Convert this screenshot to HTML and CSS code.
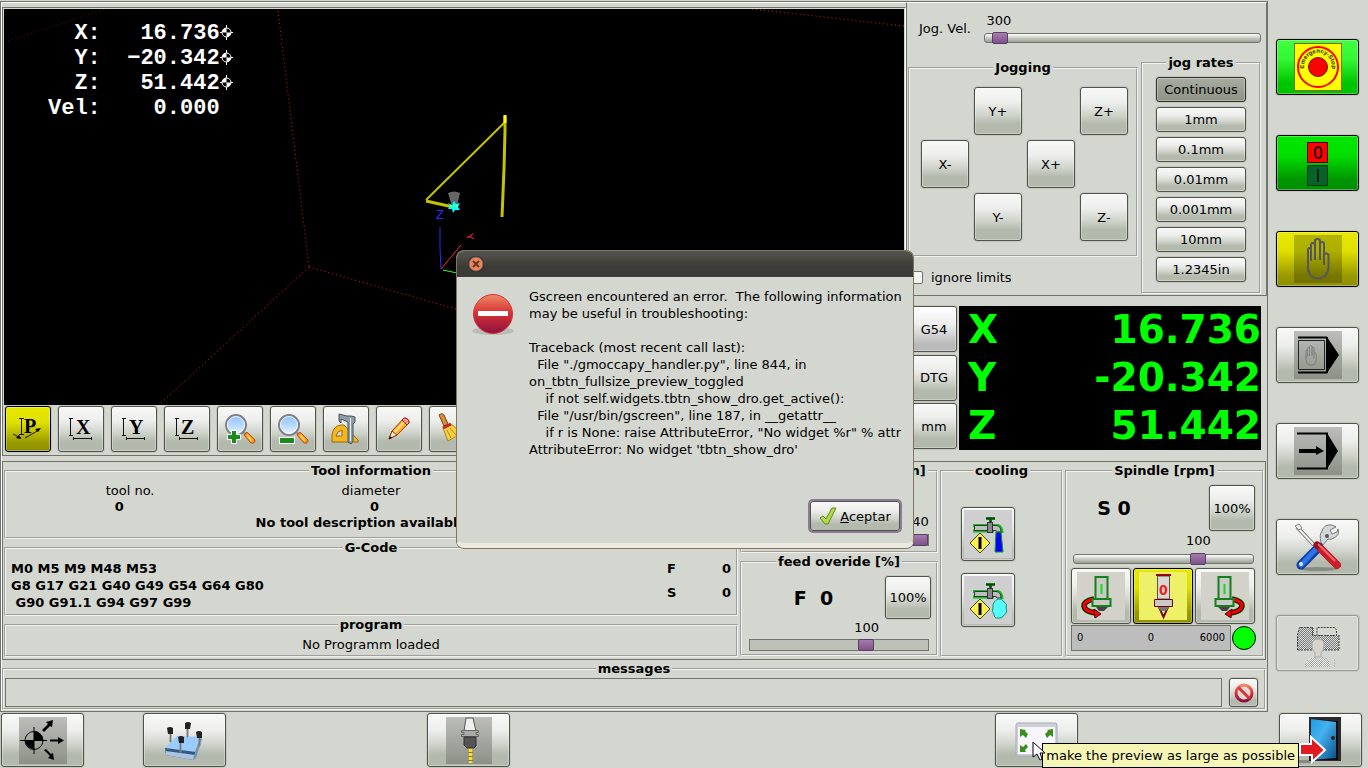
FILE: index.html
```html
<!DOCTYPE html>
<html lang="en">
<head>
    <meta charset="UTF-8">
    <meta name="viewport" content="width=device-width, initial-scale=1.0">
    <title>gmoccapy</title>
    <link rel="stylesheet" href="styles.css">
</head>
<body>
    <!-- shared symbols -->
    <svg class="defs" width="0" height="0">
        <defs>
            <linearGradient id="gray" x1="0" y1="0" x2="0" y2="1">
                <stop offset="0" stop-color="#bdbdbb"/><stop offset="1" stop-color="#8c9186"/>
            </linearGradient>
            <linearGradient id="lens" x1="0" y1="0" x2="0" y2="1">
                <stop offset="0" stop-color="#8fc3ff"/><stop offset="0.5" stop-color="#b5d8ff"/><stop offset="1" stop-color="#eef7ff"/>
            </linearGradient>
            <linearGradient id="red" x1="0" y1="0" x2="0" y2="1">
                <stop offset="0" stop-color="#f08a66"/><stop offset="0.45" stop-color="#d93434"/><stop offset="1" stop-color="#8c1141"/>
            </linearGradient>
            <linearGradient id="door" x1="0" y1="0" x2="1" y2="1">
                <stop offset="0" stop-color="#1f9be0"/><stop offset="0.4" stop-color="#45b2f0"/><stop offset="1" stop-color="#0a4f86"/>
            </linearGradient>
            <pattern id="check" width="2" height="2" patternUnits="userSpaceOnUse">
                <rect width="2" height="2" fill="#dcdedb"/><rect width="1" height="1" fill="#777"/><rect x="1" y="1" width="1" height="1" fill="#777"/>
            </pattern>
            <pattern id="checkLight" width="2" height="2" patternUnits="userSpaceOnUse">
                <rect width="2" height="2" fill="#f8f8f6"/><rect width="1" height="1" fill="#a0a09d"/><rect x="1" y="1" width="1" height="1" fill="#a0a09d"/>
            </pattern>
            <symbol id="homed" viewBox="0 0 13 15">
                <circle cx="6.500" cy="7.500" r="4.500" fill="#000" stroke="#fff"/>
                <path d="M6.500 7.500V3A4.500 4.500 0 0 0 2 7.500ZM6.500 7.500V12A4.500 4.500 0 0 0 11 7.500Z" fill="#fff"/>
                <path d="M6.500 0V3M6.500 12V15M0 7.500H2M11 7.500H13" stroke="#fff"/>
            </symbol>
            <symbol id="zoomer" viewBox="0 0 32 32">
                <path d="M19 19L23 23" stroke="#999" stroke-width="3"/>
                <path d="M20 22L23 19L31 27Q31 31 27 30Z" fill="#f58a1f" stroke="#c4500b"/>
                <path d="M23 22L28 28" stroke="#ffd34d" stroke-width="2"/>
                <circle cx="12" cy="12" r="10" fill="url(#lens)" stroke="#7f8287" stroke-width="2"/>
                <circle cx="12" cy="12" r="8.500" fill="none" stroke="#fff" opacity="0.800"/>
            </symbol>
            <symbol id="hand" viewBox="0 0 24 42">
                <path d="M2 26V12Q2 10 3.500 10Q5 10 5 12V23M5 20V7Q5 5 7 5Q9 5 9 7V22M9 20V3Q9 1 11.500 1Q14 1 14 3V22M14 20V6Q14 4 16 4Q18 4 18 6V27M18 17Q19 15 20.500 15.500Q23 16 22.500 18V29Q22 40 12 40.500Q2 40 2 29V24" fill="none" stroke="#56565c" stroke-width="2"/>
            </symbol>
            <symbol id="tap" viewBox="0 0 48 48">
                <rect width="48" height="48" fill="#cfcfcf"/>
                <path d="M22 8.500H31M26.500 8V13M9 15.500H34Q38 17 38 23M9 21H30" stroke="#10c01c" stroke-width="3" fill="none"/>
                <path d="M22 8.500H31M26.500 8V13" stroke="#0b3d12" stroke-width="2"/>
                <path d="M10.500 15.500H32Q37 15.500 37 22H33Q33 20.500 31 20.500H10.500Z" fill="#bdbdbd" stroke="#333"/>
                <rect x="23.500" y="12.500" width="5" height="10" fill="#888" stroke="#333"/>
                <path d="M16 23L26 33L16 43L6 33Z" fill="#ffee4a" stroke="#26501c"/>
                <path d="M16 27V39" stroke="#000" stroke-width="3"/>
            </symbol>
            <symbol id="turn" viewBox="0 0 48 48">
                <rect width="48" height="48" fill="#d2d1ca"/>
                <path d="M17 27Q7 29 7 34Q8 40 20 41" stroke="#18c51c" stroke-width="6" fill="none"/>
                <path d="M17 27Q7 29 7 34Q8 40 20 41" stroke="#3d0000" stroke-width="5" fill="none"/>
                <path d="M17 27Q7 29 7 34Q8 40 20 41" stroke="#f00" stroke-width="3" fill="none"/>
                <path d="M17 37L24 42L18 46Z" fill="#f00" stroke="#3d0000"/>
                <path d="M18.500 5H30.500V27H18.500Z" fill="#c9c9c5" stroke="#16801c" stroke-width="2"/>
                <path d="M15.500 27H33.500V34H15.500Z" fill="#c9c9c5" stroke="#16801c" stroke-width="2"/>
                <path d="M19 35H31L27 39H22Z" fill="#444"/>
                <path d="M24.500 12V22" stroke="#0fe01b" stroke-width="2"/>
            </symbol>
        </defs>
    </svg>

    <div class="work">
        <main class="screen">
            <div class="upper">
                <section class="preview">
                    <div class="view">
                        <svg class="scene">
                            <g stroke="#e01818" stroke-dasharray="1 3" fill="none">
                                <path d="M4 32L101 0" stroke="#6d0c0c"/>
                                <path d="M274 2L305 258"/>
                                <path d="M305 258L156 395" stroke="#ff1818"/>
                                <path d="M305 258L480 308"/>
                                <path d="M748 0L900 17"/>
                            </g>
                            <g stroke="#c4c400" fill="none">
                                <path d="M501 113L422 191" stroke-width="2"/>
                                <path d="M422 192L449 198" stroke-width="3"/>
                                <path d="M501 107V122L500 160L498 208" stroke-width="3"/>
                                <path d="M501 106V114" stroke="#ff0" stroke-width="3"/>
                            </g>
                            <path d="M444 184Q450 181 456 184L453 197H448Z" fill="#666"/>
                            <path d="M444 194L448 196L450 192L452 195L456 194L454 198L456 201L451 201L449 204L448 200L444 200L446 197Z" fill="#0ff"/>
                            <path d="M446 197H454" stroke="#ff0" stroke-dasharray="2 1"/>
                            <path d="M436 218V239L437 260" stroke="#2c2cff" fill="none"/>
                            <path d="M437 260L457 236" stroke="#ff2c2c"/>
                            <path d="M439 261L453 264" stroke="#2cff2c"/>
                            <text x="432" y="210" class="axis-z">Z</text>
                            <text x="462" y="225" class="axis-y" transform="rotate(80 462 225)">Y</text>
                        </svg>
<pre class="readout">  X:   16.736<svg width="13" height="15"><use href="#homed"/></svg>
  Y:  −20.342<svg width="13" height="15"><use href="#homed"/></svg>
  Z:   51.442<svg width="13" height="15"><use href="#homed"/></svg>
Vel:    0.000</pre>
                    </div>
                    <div class="toolbar">
                        <button class="btn yellow" aria-label="Perspective view"><svg width="32" height="32" viewBox="0 0 32 32"><path d="M9.500 5V21M7 5.500H12M7 21.500H12M1 21L9 25M13 25L27 17" stroke="#111" fill="none"/><path d="M4 25L9 26L7 22ZM23 16L29 15L26 19Z"/><text x="12" y="20" class="glyph">P</text></svg></button>
                        <button class="btn" aria-label="X view"><svg width="32" height="32" viewBox="0 0 32 32"><path d="M5.500 5V23M4 5.500H8M4 22.500H8M8 25.500H26M8.500 24V27M26.500 24V27" stroke="#111" fill="none"/><text x="11" y="21" class="glyph">X</text></svg></button>
                        <button class="btn" aria-label="Y view"><svg width="32" height="32" viewBox="0 0 32 32"><path d="M5.500 5V23M4 5.500H8M4 22.500H8M8 25.500H26M8.500 24V27M26.500 24V27" stroke="#111" fill="none"/><text x="11" y="21" class="glyph">Y</text></svg></button>
                        <button class="btn" aria-label="Z view"><svg width="32" height="32" viewBox="0 0 32 32"><path d="M5.500 5V23M4 5.500H8M4 22.500H8M8 25.500H26M8.500 24V27M26.500 24V27" stroke="#111" fill="none"/><text x="10" y="21" class="glyph">Z</text></svg></button>
                        <button class="btn" aria-label="Zoom in"><svg width="32" height="32" viewBox="0 0 32 32"><use href="#zoomer"/><path d="M7.500 17.500H12.500V21.500H16.500V26.500H12.500V30.500H7.500V26.500H3.500V21.500H7.500Z" fill="#1d8a1d" stroke="#fff"/></svg></button>
                        <button class="btn" aria-label="Zoom out"><svg width="32" height="32" viewBox="0 0 32 32"><use href="#zoomer"/><rect x="2.500" y="24.500" width="15" height="6" fill="#1d8a1d" stroke="#fff"/></svg></button>
                        <button class="btn" aria-label="Dimensions"><svg width="32" height="32" viewBox="0 0 32 32"><path d="M2 27V22Q3 13 11 12H14L28 27V29H2Z" fill="#f3b521" stroke="#9a6a0a"/><path d="M6 23Q7 18 12 17V23Z" fill="#d8dbd4" stroke="#9a6a0a"/><path d="M9 1L17 3H21L25 4V9L23 11V28L21 31L18 29V9L11 6V10L9 8Z" fill="#8f9da6" stroke="#48545c"/><path d="M20.500 5V28" stroke="#e4eaee"/></svg></button>
                        <button class="btn" aria-label="Edit"><svg width="32" height="32" viewBox="0 0 32 32"><path d="M6 26L9 18L21 5Q26 5 26 10L14 22Z" fill="#ffab2b" stroke="#a83b00"/><path d="M11 20L22 8" stroke="#ffe08a" stroke-width="2"/><path d="M19 7L24 12L26 10Q26 5 21 5Z" fill="#f09a8d" stroke="#9d2413"/><path d="M6 26L9 18L14 22Z" fill="#fbe6c4" stroke="#7a3b10"/><path d="M6 26L7 23L9 25Z"/></svg></button>
                        <button class="btn" aria-label="Clear plot"><svg width="32" height="32" viewBox="0 0 32 32"><path d="M3 2Q6 -1 8 2L12 11L8 13Z" fill="#d88e3b" stroke="#7b4210"/><path d="M7 15L15 11L26 20L12 28Z" fill="#f6cf45" stroke="#b38a10"/><path d="M7 15L15 11" stroke="#c22222" stroke-width="3"/><path d="M11 17L15 25M14 15L20 22" stroke="#b38a10"/></svg></button>
                    </div>
                </section>

                <section class="controls">
                    <div class="jog">
                        <div class="jog-vel">
                            <label for="jogvel">Jog. Vel.</label>
                            <div class="scale jog-scale">
                                <output for="jogvel">300</output>
                                <input type="range" id="jogvel" min="0" max="10000" value="270">
                            </div>
                        </div>
                        <div class="jog-body">
                            <div class="jog-left">
                                <fieldset>
                                    <legend>Jogging</legend>
                                    <div class="jog-pad">
                                        <button class="btn yp">Y+</button>
                                        <button class="btn zp">Z+</button>
                                        <button class="btn xm">X-</button>
                                        <button class="btn xp">X+</button>
                                        <button class="btn ym">Y-</button>
                                        <button class="btn zm">Z-</button>
                                    </div>
                                </fieldset>
                                <label class="limits"><input type="checkbox"> ignore limits</label>
                            </div>
                            <fieldset class="rates">
                                <legend>jog rates</legend>
                                <div class="rate-list">
                                    <button class="btn pressed">Continuous</button>
                                    <button class="btn">1mm</button>
                                    <button class="btn">0.1mm</button>
                                    <button class="btn">0.01mm</button>
                                    <button class="btn">0.001mm</button>
                                    <button class="btn">10mm</button>
                                    <button class="btn">1.2345in</button>
                                </div>
                            </fieldset>
                        </div>
                    </div>
                    <div class="dro">
                        <div class="dro-buttons">
                            <button class="btn neutral">G54</button>
                            <button class="btn">DTG</button>
                            <button class="btn">mm</button>
                        </div>
                        <div class="dro-values">
                            <p><span>X</span><span>16.736</span></p>
                            <p><span>Y</span><span>-20.342</span></p>
                            <p><span>Z</span><span>51.442</span></p>
                        </div>
                    </div>
                </section>
            </div>

            <div class="lower">
                <div class="info">
                    <fieldset>
                        <legend>Tool information</legend>
                        <div class="tool-labels"><span>tool no.</span><span>diameter</span><span>offset z</span></div>
                        <div class="tool-values"><b>0</b><b>0</b><b>0</b></div>
                        <p class="tool-desc">No tool description available</p>
                    </fieldset>
                    <fieldset>
                        <legend>G-Code</legend>
                        <div class="codes">
<pre>M0 M5 M9 M48 M53
G8 G17 G21 G40 G49 G54 G64 G80
 G90 G91.1 G94 G97 G99</pre>
                            <dl>
                                <dt>F</dt><dd>0</dd>
                                <dt>S</dt><dd>0</dd>
                            </dl>
                        </div>
                    </fieldset>
                    <fieldset>
                        <legend>program</legend>
                        <p class="program">No Programm loaded</p>
                    </fieldset>
                </div>

                <div class="feeds">
                    <fieldset class="max-vel">
                        <legend>max. velocity [mm/min]</legend>
                        <div class="scale max-scale">
                            <output for="maxvel">14040</output>
                            <input type="range" id="maxvel" class="square" max="14040" value="14040" aria-label="max. velocity">
                        </div>
                    </fieldset>
                    <fieldset class="feed">
                        <legend>feed overide [%]</legend>
                        <div class="big-row"><strong>F&nbsp; 0</strong><button class="btn">100%</button></div>
                        <div class="scale feed-scale">
                            <output for="feed">100</output>
                            <input type="range" id="feed" class="square" max="150" value="100" aria-label="feed override">
                        </div>
                    </fieldset>
                </div>

                <fieldset class="cooling">
                    <legend>cooling</legend>
                    <div class="taps">
                        <button class="btn" aria-label="Flood"><svg width="48" height="48" viewBox="0 0 48 48"><use href="#tap"/><path d="M32 22H37L39 42H31Z" fill="#00f" stroke="#0a9a14"/></svg></button>
                        <button class="btn" aria-label="Mist"><svg width="48" height="48" viewBox="0 0 48 48"><use href="#tap"/><path d="M34 23Q38 22 40 26Q44 28 42 32Q44 37 40 39Q38 43 35 42Q30 43 30 38Q27 36 29 32Q28 26 34 23Z" fill="#5ff" stroke="#178a68"/></svg></button>
                    </div>
                </fieldset>

                <fieldset class="spindle">
                    <legend>Spindle [rpm]</legend>
                    <div class="big-row"><strong>S 0</strong><button class="btn">100%</button></div>
                    <div class="scale spindle-scale">
                        <output for="spin">100</output>
                        <input type="range" id="spin" max="140" value="100" aria-label="spindle override">
                    </div>
                    <div class="spin-buttons">
                        <button class="btn" aria-label="Spindle forward"><svg width="48" height="48" viewBox="0 0 48 48"><use href="#turn"/></svg></button>
                        <button class="btn yellow" aria-label="Spindle stop"><svg width="48" height="48" viewBox="0 0 48 48"><rect width="48" height="48" fill="#eef068"/><path d="M18.500 4H30.500V27H18.500Z" fill="#d8d8d2" stroke="#555"/><path d="M17 3H32" stroke="#900" stroke-width="2"/><path d="M20 35H29L24.500 45Z" fill="#ffc" stroke="#700" stroke-width="2"/><path d="M18 34H31L27 39H22Z" fill="#777"/><path d="M15.500 27.500H33.500V34.500H15.500Z" fill="#c9c9c5" stroke="#700"/><text x="20" y="23" class="stop-zero">0</text></svg></button>
                        <button class="btn" aria-label="Spindle reverse"><svg width="48" height="48" viewBox="0 0 48 48"><use href="#turn" transform="translate(48 0) scale(-1 1)"/></svg></button>
                    </div>
                    <div class="rpm">
                        <div class="rpm-bar"><span>0</span><span>0</span><span>6000</span></div>
                        <span class="led"></span>
                    </div>
                </fieldset>
            </div>

            <fieldset class="messages">
                <legend>messages</legend>
                <div class="message-row">
                    <div class="message-box"></div>
                    <button class="btn" aria-label="Delete message"><svg width="22" height="22" viewBox="0 0 22 22"><circle cx="11" cy="11" r="8" fill="#e8d8d4" stroke="url(#red)" stroke-width="3"/><path d="M5.500 5.500L16.500 16.500" stroke="#d03a3f" stroke-width="3"/></svg></button>
                </div>
            </fieldset>
        </main>

        <nav class="modes">
            <button class="btn lime" aria-label="Emergency stop"><svg width="48" height="48" viewBox="0 0 48 48"><rect x="0.500" y="0.500" width="47" height="47" fill="#ff0" stroke="#8a6a00"/><circle cx="24" cy="24" r="20" fill="none" stroke="#f00" stroke-width="2"/><circle cx="24" cy="24" r="9.500" fill="#f00" stroke="#701000"/><path id="arc" d="M12 31A14 14 0 1 1 36 31" fill="none"/><text class="estop"><textPath href="#arc" startOffset="50%">Emergency-Stop</textPath></text></svg></button>
            <button class="btn green" aria-label="Machine on"><svg width="48" height="48" viewBox="0 0 48 48"><rect x="13.500" y="3.500" width="20" height="20" fill="#f00" stroke="#500"/><rect x="13.500" y="26.500" width="20" height="20" fill="#07632a" stroke="#031"/><text x="24" y="20" class="power">0</text><path d="M24 30V43" stroke="#021" stroke-width="2"/></svg></button>
            <button class="btn yellow" aria-label="Manual mode"><svg width="48" height="48" viewBox="0 0 48 48"><rect width="48" height="48" opacity="0.220"/><use href="#hand" x="12" y="3" width="24" height="42"/></svg></button>
            <button class="btn" aria-label="MDI mode"><svg width="48" height="48" viewBox="0 0 48 48"><rect width="48" height="48" fill="url(#gray)"/><path d="M4 6.500H33M4 41.500H33M33 6V42" stroke="#000" stroke-width="2" fill="none"/><path d="M33 6L45 24L33 42Z"/><path d="M4.500 9.500H30.500V38.500H4.500Z" fill="none" stroke="#222"/><use href="#hand" x="11" y="14" width="12" height="21" opacity="0.500"/></svg></button>
            <button class="btn" aria-label="Auto mode"><svg width="48" height="48" viewBox="0 0 48 48"><rect width="48" height="48" fill="url(#gray)"/><path d="M3 6.500H33V41.500H3" stroke="#000" stroke-width="2" fill="none"/><path d="M33 6L44 24L33 42Z"/><path d="M5 22H22V19L30 24L22 28V26H5Z"/></svg></button>
            <button class="btn" aria-label="Settings"><svg width="48" height="48" viewBox="0 0 48 48"><ellipse cx="24" cy="46" rx="19" ry="2" fill="#000" opacity="0.250"/><path d="M3 4L20 22" stroke="#777" stroke-width="4"/><path d="M3 4L20 22" stroke="#eee" stroke-width="2"/><path d="M1 3L5 1L8 5L5 7Z" fill="#eee" stroke="#888"/><path d="M27 19Q25 12 28 8Q30 1 38 2L42 4L36 7L38 11L43 9L44 6Q46 12 40 15Q37 17 34 16L28 23Z" fill="#d4d6d8" stroke="#777"/><circle cx="33" cy="13" r="2" fill="#555"/><path d="M7 42L25 24" stroke="#0b3fa3" stroke-width="9" stroke-linecap="round"/><path d="M7 42L24 24" stroke="#2f74e4" stroke-width="5" stroke-linecap="round"/><circle cx="7" cy="41" r="2" fill="#dfe6ef"/><path d="M23 22L43 42" stroke="#96101a" stroke-width="7" stroke-linecap="round"/><path d="M28 27L43 42" stroke="#c81f2b" stroke-width="8" stroke-linecap="round"/><path d="M24 21L41 38" stroke="#f36a6a" stroke-width="2"/></svg></button>
            <button class="btn off" disabled aria-label="User tab"><svg width="48" height="48" viewBox="0 0 48 48"><path d="M3 31V15L6 8H20V16H45V31Z" fill="url(#check)" shape-rendering="crispEdges"/><path d="M3.500 31V16L5.500 8.500H18.500V16.500H23V8.500H40.500L42.500 11V16.500H23M45 16V31H3" fill="none" stroke="#444" stroke-dasharray="2 1"/><path d="M18 26Q18 20 24 20Q30 20 30 26Q30 31 27 34V38H21V34Q18 31 18 26Z" fill="#d8d2cc" stroke="#aaa"/><path d="M11 48Q11 40 20 38Q24 42 28 38Q36 40 36 48Z" fill="url(#checkLight)" shape-rendering="crispEdges"/><path d="M40.500 40V48" stroke="#bbb" stroke-dasharray="2 1"/></svg></button>
        </nav>
    </div>

    <footer class="bottom">
        <button class="btn c1" aria-label="Homing"><svg width="48" height="47" viewBox="0 0 48 47"><rect width="48" height="47" fill="url(#gray)"/><circle cx="15" cy="23.500" r="9" fill="none" stroke="#000"/><path d="M15 23V14A9 9 0 0 1 24 23ZM15 23V32A9 9 0 0 1 6 23Z"/><path d="M15 10V37M1 23.500H28" stroke="#000"/><path d="M31 22.500H39V20L45 23.500L39 27V24.500H31ZM23 13L29 7L27 5L34 3L33 10L31 9L25 15ZM25 33L31 39L29 41L35 43L34 36L32 37L27 32Z"/></svg></button>
        <button class="btn c2" aria-label="Touch off"><svg width="48" height="47" viewBox="0 0 48 47"><path d="M16 19L39 20L32 36L4 31Z" fill="#9bccff"/><path d="M4 31L35 35L32 43L5 38Z" fill="#33597f"/><path d="M5 34L34 38L32 43L5 38Z" fill="#a8c4e0"/><path d="M39 20L41 22L35 41L32 43L34 35Z" fill="#6d93ba"/><g fill="#444" stroke="#888"><path d="M9 16H10V25H9ZM26 11H27V20H26ZM38 20H39V29H38ZM19 25H20V35H19Z"/></g><g fill="#222"><path d="M6 11Q9 9 12 11V17H7ZM24 6Q27 4 30 6L29 12H24ZM35 15Q38 13 41 15V21H36ZM17 20Q20 18 23 20V26H18Z"/></g></svg></button>
        <button class="btn c4" aria-label="Tool"><svg width="46" height="47" viewBox="0 0 46 47"><rect width="46" height="47" fill="url(#gray)"/><path d="M20 1H27L30 14H18Z" fill="#eee" stroke="#555"/><path d="M15.500 13.500H32.500V15.500H30V17.500H32.500V19.500H15.500V17.500H18V15.500H15.500Z" fill="#aaa" stroke="#666"/><path d="M18 20H30V29L28 31H21L18 28Z" fill="#555" stroke="#333"/><path d="M22 31H27V46H22Z" fill="#777"/><path d="M24.500 32V46" stroke="#fd2" stroke-width="4" stroke-dasharray="3 1"/></svg></button>
        <button class="btn c8" aria-label="Fullsize preview"><svg width="44" height="36" viewBox="0 0 44 36"><rect x="1" y="1" width="41" height="33" rx="2" fill="#cfcfd8" stroke="#aaaab8"/><rect x="3" y="5" width="37" height="27" fill="#f6f6fc"/><path d="M5 7L11 8L10 9L13 12L11 16L8 13L5 15ZM38 7L32 8L33 9L30 12L32 16L35 13L38 15ZM5 30L11 30L10 28L13 25L11 22L8 25L5 23ZM38 30L32 30L33 28L30 25L32 22L35 25L38 23Z" fill="#3a8f1c"/></svg></button>
        <button class="btn c10" aria-label="Exit"><svg width="60" height="48" viewBox="1 0 60 48"><path d="M0 44H24V47H4Z" opacity="0.250"/><path d="M19 1H51V45H19Z" fill="#2b2b2b"/><path d="M21 3L48 5V44H21Z" fill="#0b0b0b"/><path d="M21 3L46 6V42L21 44Z" fill="url(#door)"/><circle cx="43" cy="22" r="2" fill="#222"/><path d="M10 28H21V21L35 34L22 46V39H10Z" fill="#e01b22" stroke="#fff" stroke-width="2"/></svg></button>
    </footer>

    <div class="tooltip" role="tooltip">make the preview as large as possible</div>
    <svg class="cursor" width="14" height="20" viewBox="0 0 14 20"><path d="M1 1V16L5 13L8 19L10 18L8 12H13Z" fill="#fff" stroke="#000"/></svg>

    <!-- error dialog -->
    <div class="dialog" role="alertdialog" aria-labelledby="errtext">
        <div class="titlebar"><button class="close" aria-label="Close"><svg width="18" height="18" viewBox="0 0 18 18"><circle cx="9" cy="9" r="8" fill="#24231f"/><circle cx="9" cy="9" r="7" fill="#f0825a" stroke="#70695f"/><path d="M6 6L12 12M12 6L6 12" stroke="#5a3a2c" stroke-width="2"/></svg></button></div>
        <div class="dialog-body">
            <svg width="44" height="44" viewBox="0 0 44 44"><ellipse cx="22" cy="38" rx="21" ry="4" fill="#000" opacity="0.120"/><circle cx="22" cy="21" r="19.500" fill="url(#red)" stroke="#d33434"/><rect x="7" y="18" width="30" height="5" fill="#fff"/></svg>
<pre id="errtext">Gscreen encountered an error.  The following information
may be useful in troubleshooting:

Traceback (most recent call last):
  File "./gmoccapy_handler.py", line 844, in
on_tbtn_fullsize_preview_toggled
    if not self.widgets.tbtn_show_dro.get_active():
  File "/usr/bin/gscreen", line 187, in __getattr__
    if r is None: raise AttributeError, "No widget %r" % attr
AttributeError: No widget 'tbtn_show_dro'</pre>
        </div>
        <div class="dialog-actions">
            <button class="btn accept"><svg width="18" height="18" viewBox="0 0 18 18"><path d="M1 11L4 9L7 12L13 1H17L9 17H6Z" fill="#b5d84a" stroke="#5d8a1a"/></svg><span><u>A</u>ceptar</span></button>
        </div>
    </div>
</body>
</html>
```
FILE: styles.css
```css
* {box-sizing: border-box;}
body {margin: 0; min-height: 100vh; display: flex; flex-direction: column; background: #d4d7d0; color: #000; font: 13px/17px "DejaVu Sans", sans-serif; overflow: hidden;}
p, pre, dl, dd {margin: 0;}
pre {font: inherit;}
svg {display: block; flex: none;}
.defs {position: absolute;}

/* buttons */
.btn {display: flex; align-items: center; justify-content: center; padding: 0; border: 1px solid #50534a; border-radius: 3px; background: linear-gradient(#f8f9f7, #eeefed 30%, #cdd2c9 60%, #b3b9ad 78%, #b3b9ad); box-shadow: inset 0 0 0 1px rgba(255, 255, 255, 0.3), 0 0 0 1px #c3c7be; font: inherit; color: #000;}
.btn.pressed {background: linear-gradient(#a8aca0, #8e9386); border-color: #2e302a;}
.btn.neutral {background: linear-gradient(#fff, #ededed 40%, #b9b9b9 85%);}
.btn.yellow {background: linear-gradient(#e8e800, #e0e000 35%, #9a9a00 80%, #8e8e00); border-color: #000;}
.btn.green {background: linear-gradient(#00e800, #00e000 35%, #009600 80%, #008e00); border-color: #000;}
.btn.lime {background: linear-gradient(#40ff40, #34f834 35%, #00c400 80%); border-color: #000;}
.btn.off {background: #d4d7d0; border-color: #9a9c96;}

/* frames */
fieldset {min-width: 0; margin: 0; padding: 0; border: 2px groove #f2f3f0;}
legend {margin: 0 auto; padding: 0 2px;}
legend, .tool-values, .tool-desc, .codes {font-weight: bold;}

/* sliders */
.scale {display: flex; flex-direction: column;}
.scale output {width: 30px; text-align: center;}
input[type=range] {appearance: none; width: 100%; height: 12px; margin: 0; background: none;}
input[type=range]::-webkit-slider-runnable-track {height: 10px; border: 1px solid #73766d; border-radius: 3px; background: linear-gradient(#fff, #c8ccc4 50%, #999f92);}
input[type=range]::-webkit-slider-thumb {appearance: none; width: 16px; height: 12px; margin-top: -2px; border: 1px solid #5c3f66; border-radius: 2px; background: linear-gradient(#a47cab, #80528a);}
input.square::-webkit-slider-runnable-track {height: 12px; border-radius: 0; background: #bcc1b8;}
input.square::-webkit-slider-thumb {margin-top: -1px;}

.work {flex: 1; display: flex; min-height: 0;}
.screen {flex: 1; min-width: 0; display: flex; flex-direction: column; margin-top: 1px; border: 1px solid #70736a; box-shadow: inset 1px 1px 0 #fff;}
.upper {flex: 1; display: flex;}

/* preview */
.preview {flex: 1; min-width: 0; display: flex; flex-direction: column; margin: 5px 0 5px 1px; border: 1px solid #70736a; border-right-color: #fff; padding: 1px;}
.view {flex: 1; display: grid; background: #000; overflow: hidden;}
.scene, .readout {grid-area: 1 / 1;}
.scene {width: 100%; height: 100%;}
.axis-z {font: 13px "Liberation Sans", sans-serif; fill: #2c2cff;}
.axis-y {font: 10px "Liberation Sans", sans-serif; fill: #ff2c2c;}
.readout {padding: 12px 44px; color: #fff; font: bold 22px/25px "Liberation Mono", monospace;}
.readout svg {display: inline-block; vertical-align: -1px;}
.toolbar {display: flex; gap: 7px; padding: 1px 1px 2px;}
.toolbar .btn {width: 46px; height: 46px;}
.glyph {font: bold 20px "Liberation Serif", serif;}

/* jogging */
.controls {width: 361px; display: flex; flex-direction: column; gap: 10px;}
.jog {border: 1px solid #70736a; border-top-color: #fff; padding: 7px 5px 1px 1px;}
.jog-vel {display: flex; align-items: center; gap: 13px; height: 36px; padding-left: 11px;}
.jog-scale {flex: 1;}
.jog-scale input {margin-top: 3px;}
.jog-body {display: flex; gap: 3px; padding-top: 8px;}
.jog-left {flex: 1; padding-top: 5px;}
.jog-pad {display: grid; grid-template: repeat(3, 48px) / repeat(4, 48px); gap: 5px; padding: 11px 0 14px 11px;}
.yp {grid-area: 1 / 2;}
.zp {grid-area: 1 / 4;}
.xm {grid-area: 2 / 1;}
.xp {grid-area: 2 / 3;}
.ym {grid-area: 3 / 2;}
.zm {grid-area: 3 / 4;}
.limits {display: flex; align-items: center; gap: 8px; padding: 12px 0 0 2px;}
.limits input {appearance: none; width: 13px; height: 13px; margin: 0; border: 1px solid #70736a; border-radius: 2px; background: #f4f5f3;}
.rates {width: 120px;}
.rate-list {display: grid; gap: 5px; justify-content: center; padding: 6px 0 10px;}
.rate-list .btn {width: 90px; height: 25px;}

/* position display */
.dro {display: flex; gap: 2px; padding: 0 6px 0 5px;}
.dro-buttons {display: grid; gap: 2px;}
.dro-buttons .btn {width: 46px; height: 46px;}
.dro-values {flex: 1; background: #000; color: #0f0; font: bold 39px/48px "DejaVu Sans", sans-serif;}
.dro-values p {display: flex; justify-content: space-between; padding-left: 9px;}

/* lower part */
.lower {display: flex; gap: 2px; margin: 0 1px; padding: 0 1px 2px; border: 1px solid #70736a;}
.info {flex: 1;}
.tool-labels {display: grid; grid-template-columns: 34% 32% 1fr; text-align: center; padding-top: 4px; line-height: 16px;}
.tool-values {display: grid; grid-template-columns: 31% 39% 1fr; text-align: center; line-height: 16px;}
.tool-desc {text-align: center; line-height: 16px; padding: 0 20px 6px 0;}
.codes {display: flex; justify-content: space-between; padding: 4px 4px 3px 5px;}
.codes dl {display: grid; grid-template-columns: 10px 10px; gap: 7px 45px; align-content: start;}
.program {text-align: center; padding: 3px 0 2px;}
.feeds {width: 198px;}
.max-vel {height: 91px;}
.max-scale {align-items: flex-end; padding: 34px 7px 0;}
.max-scale output {width: 42px;}
.max-scale input {margin-top: 4px;}
.big-row {display: flex; align-items: center;}
.big-row strong {flex: 1; text-align: center; font: bold 19px/22px "DejaVu Sans", sans-serif;}
.feed .big-row {padding: 6px 5px 0 0;}
.feed .big-row .btn {width: 46px; height: 43px;}
.feed-scale {padding: 0 7px 3px;}
.feed-scale output {margin-left: 57%;}
.feed-scale input {margin-top: 3px;}
.cooling {width: 123px;}
.taps {display: grid; gap: 12px; padding: 28px 0 0 19px;}
.taps .btn {width: 54px; height: 54px;}
.spindle {width: 199px;}
.spindle .big-row {gap: 48px; padding: 6px 7px 0 0;}
.spindle .big-row .btn {width: 46px; height: 46px;}
.spindle-scale {padding: 1px 8px 0 6px;}
.spindle-scale output {margin-left: 61%;}
.spindle-scale input {margin-top: 4px;}
.spin-buttons {display: flex; gap: 2px; padding: 3px 7px 0 4px;}
.spin-buttons .btn {flex: 1; height: 56px;}
.rpm {display: flex; align-items: center; gap: 1px; padding: 1px 6px 3px 4px;}
.rpm-bar {flex: 1; display: grid; grid-template-columns: 1fr auto 1fr; padding: 0 5px; border: 1px solid #70736a; background: #bdbdbd; font: 11px/24px "DejaVu Sans Condensed", sans-serif;}
.rpm-bar span:last-child {text-align: right;}
.led {width: 24px; height: 24px; border: 1px solid #000; border-radius: 50%; background: #0f0;}
.stop-zero {font: bold 14px "DejaVu Sans Condensed", sans-serif; fill: #f02020;}

.messages {margin: 0 1px 1px;}
.message-row {display: flex; gap: 7px; padding: 1px 6px 1px 1px;}
.message-box {flex: 1; border: 1px solid #70736a;}
.message-row .btn {width: 29px; height: 29px;}

/* mode buttons */
.modes {width: 100px; display: flex; flex-direction: column; gap: 40px; align-items: flex-start; padding: 39px 0 0 8px;}
.modes .btn {width: 83px; height: 56px;}
.estop {font: bold 6px "Liberation Sans", sans-serif; fill: #222; text-anchor: middle;}
.power {font: 18px "DejaVu Sans Condensed", sans-serif; text-anchor: middle;}

.bottom {display: grid; grid-template-columns: repeat(10, 83px); justify-content: space-between; padding: 1px 6px 1px 1px;}
.bottom .btn {height: 54px; overflow: hidden;}
.c1 {grid-column: 1;}
.c2 {grid-column: 2;}
.c4 {grid-column: 4;}
.c8 {grid-column: 8;}
.c10 {grid-column: 10;}

.tooltip {position: absolute; right: 69px; bottom: 0; padding: 3px 3px 2px; border: 1px solid #000; background: #f5f5b5; line-height: 18px;}
.cursor {position: absolute; left: 1032px; top: 741px;}

/* dialog */
.dialog {position: absolute; left: 456px; top: 250px; width: 458px; border: 1px solid #85755f; border-bottom: 5px solid #ece9e1; border-radius: 8px; background: #d4d7d0; overflow: hidden; box-shadow: 0 1px 0 #85755f;}
.titlebar {display: flex; align-items: center; height: 26px; padding-left: 10px; background: linear-gradient(#56554f, #3c3b37 60%);}
.close {padding: 0; border: 0; background: none;}
.dialog-body {display: flex; gap: 14px; padding: 11px 0 0 14px;}
.dialog-body svg {margin-top: 5px;}
.dialog-actions {display: flex; justify-content: flex-end; padding: 43px 13px 12px;}
.accept {gap: 3px; width: 90px; height: 30px; box-shadow: 0 0 0 2px #8d7a96;}
```
